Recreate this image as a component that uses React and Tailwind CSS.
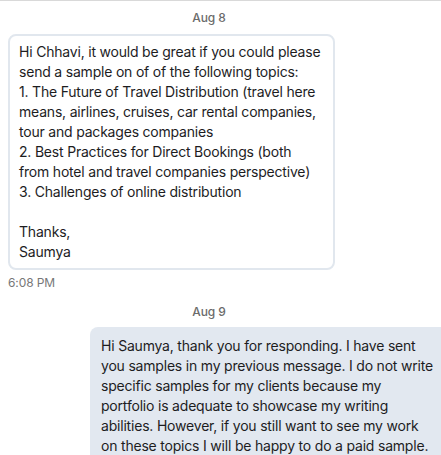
import React from 'react';

const first = [
  'Hi Chhavi, it would be great if you could please',
  'send a sample on of of the following topics:',
  '1. The Future of Travel Distribution (travel here',
  'means, airlines, cruises, car rental companies,',
  'tour and packages companies',
  '2. Best Practices for Direct Bookings (both',
  'from hotel and travel companies perspective)',
  '3. Challenges of online distribution',
  '',
  'Thanks,',
  'Saumya',
];

const second = [
  'Hi Saumya, thank you for responding. I have sent',
  'you samples in my previous message. I do not write',
  'specific samples for my clients because my',
  'portfolio is adequate to showcase my writing',
  'abilities. However, if you still want to see my work',
  'on these topics I will be happy to do a paid sample.',
];

function Lines({ lines }) {
  return lines.map((l, i) => (
    <div key={i} className="h-5 whitespace-nowrap">{l}</div>
  ));
}

export default function App() {
  return (
    <div
      className="w-[441px] h-[455px] overflow-hidden bg-white border-t border-[#d9d9d9] text-[#1d1d1f]"
      style={{ fontFamily: 'Inter, "Noto Sans", sans-serif' }}
    >
      <div className="w-[418px] pt-[9px] text-center text-xs font-medium text-[#6b6b6b] leading-4 tracking-[-0.1px]">Aug 8</div>

      <div className="ml-2 mt-[8px] w-[327px] rounded-lg border-2 border-[#e1e7ee] px-[9px] py-[6px] text-sm leading-5 tracking-[-0.2px]">
        <Lines lines={first} />
      </div>
      <div className="ml-2 mt-[5px] text-xs text-[#777] leading-4 tracking-[-0.1px]">6:08 PM</div>

      <div className="w-[418px] mt-[13px] text-center text-xs font-medium text-[#6b6b6b] leading-4 tracking-[-0.1px]">Aug 9</div>

      <div className="ml-[90px] mt-[7px] w-[370px] rounded-lg bg-[#e2e8f0] px-[11px] py-[9px] text-sm leading-5 tracking-[-0.2px]">
        <Lines lines={second} />
      </div>
    </div>
  );
}
